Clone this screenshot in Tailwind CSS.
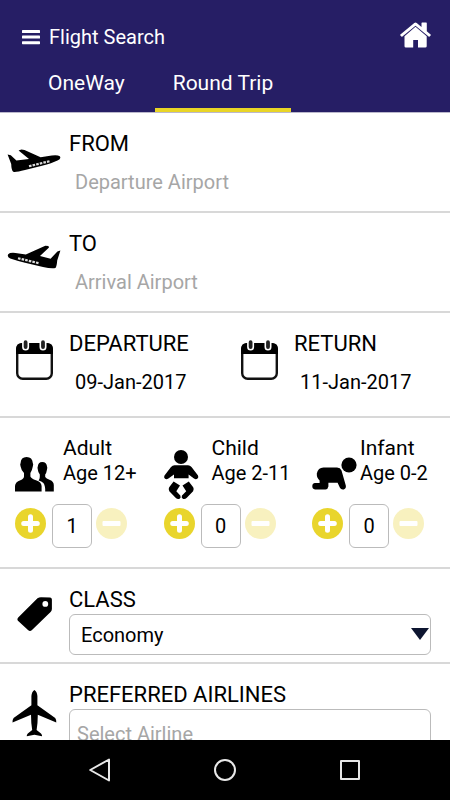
<!DOCTYPE html>
<html lang="en">
<head>
    <meta charset="UTF-8">
    <meta name="viewport" content="width=device-width, initial-scale=1.0">
    <title>Flight Search</title>
    <script src="https://cdn.jsdelivr.net/npm/@tailwindcss/browser@4"></script>
</head>
<body class="bg-white text-black font-[Roboto,sans-serif]">

    <div class="flex h-screen flex-col overflow-hidden">

        <!-- Header with menu, title and trip type tabs -->
        <header class="shrink-0 border-b border-[#bbb8cc] bg-[#261e65] pt-[17px] text-white">
            <div class="flex h-10 items-center justify-between pr-[19px] pl-[22px]">
                <div class="flex items-center gap-[9px]">
                    <button type="button" aria-label="Menu">
                        <svg class="block h-[16px] w-[18px]" viewBox="0 0 18 16" fill="currentColor">
                            <rect x="0" y="1" width="18" height="3" rx="0.6"/>
                            <rect x="0" y="6.6" width="18" height="3" rx="0.6"/>
                            <rect x="0" y="12.2" width="18" height="3" rx="0.6"/>
                        </svg>
                    </button>
                    <h1 class="text-[20px] leading-7">Flight Search</h1>
                </div>
                <a href="#" aria-label="Home">
                    <svg class="mb-1 block h-[26px] w-[31px]" viewBox="0 0 31 26" fill="currentColor">
                        <path d="M15.5 4.8 26.7 14.2V24.2Q26.7 25.6 25.3 25.6H18V18H13.2V25.6H5.9Q4.5 25.6 4.5 24.2V14.2Z"/>
                        <path d="M14.3.9Q15.5 0 16.7.9L21.5 4.9V1.2Q21.5.6 22.1.6H26.2Q26.8.6 26.8 1.2V9.3L30.6 12.5Q31.1 13 30.6 13.5L29.6 14.6Q29.1 15 28.6 14.6L15.5 3.8 2.4 14.6Q1.9 15 1.4 14.6L.4 13.5Q-.1 13 .4 12.5Z"/>
                    </svg>
                </a>
            </div>
            <nav class="flex h-[55px] gap-[12px] pl-[30px] text-[21px]">
                <button type="button" class="border-b-4 border-transparent px-[18px] pt-[2px]">OneWay</button>
                <button type="button" class="border-b-4 border-[#e9d526] px-[18px] pt-[2px]">Round Trip</button>
            </nav>
        </header>

        <form class="min-h-0 flex-1 overflow-hidden">
            <!-- From -->
            <div class="flex h-[100px] border-b-2 border-[#d8d8d8] pt-[17px]">
                <div class="w-[69px] shrink-0 pt-[19px] pl-[7px]">
                    <svg class="block h-[24px] w-[54px]" viewBox="0 0 54 24">
                        <path d="M.6 5.4 3.8 6.2 9.4 11.4 22 10 11.6 1.4 14.4.5 17.5 1 33.6 8.2 44.8 6.4Q50.6 5.6 52.8 7.2 54.6 9.7 50.5 11.6 45 14.3 35 16.8L18 21Q9 23.4 6.2 22.8 4.4 21.2 4.2 15Z" fill="#000"/>
                        <path d="M22 17.2 42.5 12.2" stroke="#ddd" stroke-width="2.2" stroke-dasharray="2.6 1.1"/>
                    </svg>
                </div>
                <div class="min-w-0 flex-1">
                    <label for="from" class="block text-[22px] leading-7">FROM</label>
                    <input id="from" type="text" placeholder="Departure Airport" class="mt-1 block h-10 w-full px-[6px] text-[20px] outline-none placeholder:text-[#a6a6a6]">
                </div>
            </div>

            <!-- To -->
            <div class="flex h-[100px] border-b-2 border-[#d8d8d8] pt-[17px]">
                <div class="w-[69px] shrink-0 pt-[15px] pl-[7px]">
                    <svg class="block h-[24px] w-[54px]" viewBox="0 0 54 24">
                        <path d="M53.4 5.6 50.4 6.4 43.6 13.8 33 11 42 2.4 41.4 1 38.3.8 18.8 9.6 8.5 8Q2.8 7.4 1.2 9.3-.2 12 3.2 13.6 9 15.6 18 17.8L36 21.9Q44.5 24 48.4 23 49.8 21.6 50.2 15.5Z" fill="#000"/>
                        <path d="M11 13.2 32.5 18.4" stroke="#ddd" stroke-width="2.2" stroke-dasharray="2.6 1.1"/>
                    </svg>
                </div>
                <div class="min-w-0 flex-1">
                    <label for="to" class="block text-[22px] leading-7">TO</label>
                    <input id="to" type="text" placeholder="Arrival Airport" class="mt-1 block h-10 w-full px-[6px] text-[20px] outline-none placeholder:text-[#a6a6a6]">
                </div>
            </div>

            <!-- Dates -->
            <div class="grid h-[105px] grid-cols-2 border-b-2 border-[#d8d8d8] pt-[17px]">
                <div class="flex">
                    <div class="w-[69px] shrink-0 pt-[9px] pl-[15px]">
                        <svg class="block h-[42px] w-[38px]" viewBox="0 0 38 42">
                            <rect x="2.2" y="5.2" width="34.6" height="34.6" rx="5.5" fill="#fff" stroke="#111" stroke-width="2.4"/>
                            <path d="M1 15V10Q1 4 7 4H32Q38 4 38 10V15Z" fill="#000"/>
                            <path d="M10.6 3.2V8M28 3.2V8" stroke="#fff" stroke-width="7" stroke-linecap="round"/>
                            <path d="M10.6 3.2V8M28 3.2V8" stroke="#222" stroke-width="3.8" stroke-linecap="round"/>
                        </svg>
                    </div>
                    <div class="min-w-0 flex-1">
                        <label for="departure" class="block text-[22px] leading-7">DEPARTURE</label>
                        <input id="departure" type="text" value="09-Jan-2017" class="mt-1 block h-10 w-full px-[6px] text-[20px] outline-none">
                    </div>
                </div>
                <div class="flex">
                    <div class="w-[69px] shrink-0 pt-[9px] pl-[15px]">
                        <svg class="block h-[42px] w-[38px]" viewBox="0 0 38 42">
                            <rect x="2.2" y="5.2" width="34.6" height="34.6" rx="5.5" fill="#fff" stroke="#111" stroke-width="2.4"/>
                            <path d="M1 15V10Q1 4 7 4H32Q38 4 38 10V15Z" fill="#000"/>
                            <path d="M10.6 3.2V8M28 3.2V8" stroke="#fff" stroke-width="7" stroke-linecap="round"/>
                            <path d="M10.6 3.2V8M28 3.2V8" stroke="#222" stroke-width="3.8" stroke-linecap="round"/>
                        </svg>
                    </div>
                    <div class="min-w-0 flex-1">
                        <label for="return" class="block text-[22px] leading-7">RETURN</label>
                        <input id="return" type="text" value="11-Jan-2017" class="mt-1 block h-10 w-full px-[6px] text-[20px] outline-none">
                    </div>
                </div>
            </div>

            <!-- Passengers -->
            <div class="flex h-[151px] border-b-2 border-[#d8d8d8] pt-[18px]">
                <div class="w-[33%]">
                    <div class="flex h-[68px] gap-[3px] pl-3">
                        <svg class="mt-[13px] block h-[52px] w-[48px] shrink-0" viewBox="0 0 48 52">
                            <path d="M30.2 13Q34.8 13.2 35 17.6 35.6 18.4 35 20.6 34.4 24.4 33.2 25.6V28Q34 29.6 38 31 41.6 32.4 41.8 36V42.5H33.2Q33.4 36.5 31.4 34 29.6 32.2 26.6 31.4 27.8 30 27.8 28V25.6Q26.2 24 25.8 20.6 25.2 18.4 25.8 17.6 26 13.2 30.2 13Z"/>
                            <path d="M14.6 8Q20.4 8.2 20.8 14 21.6 15 20.8 17.6 20 22 18.4 24V27.4Q19.2 29.4 24 31.2 29.4 33 29.6 37V42.5H3V37Q3.2 33 8.4 31.2 12 29.6 12 27.4V24Q9.4 22 8.6 17.6 7.8 15 8.6 14 8.8 8.2 14.6 8Z"/>
                        </svg>
                        <label for="adults" class="whitespace-nowrap">
                            <span class="block text-[21px] leading-[25px]">Adult</span>
                            <span class="block text-[20px] leading-[25px]">Age 12+</span>
                        </label>
                    </div>
                    <div class="flex h-[43px] items-center pl-[15px]">
                        <button type="button" aria-label="Add adult" class="mb-[4px] shrink-0">
                            <svg class="block h-[31px] w-[31px]" viewBox="0 0 31 31"><circle cx="15.5" cy="15.5" r="15.5" fill="#e9d52c"/><path d="M15.5 8.7V22.3M8.7 15.5H22.3" stroke="#fff" stroke-width="5" stroke-linecap="round"/></svg>
                        </button>
                        <input id="adults" type="text" value="1" class="ml-[6px] h-[44px] w-[40px] rounded-[6px] border border-[#bbb] text-center text-[20px] outline-none">
                        <button type="button" aria-label="Remove adult" class="mb-[4px] ml-1 shrink-0">
                            <svg class="block h-[31px] w-[31px]" viewBox="0 0 31 31"><circle cx="15.5" cy="15.5" r="15.5" fill="#f8f1bf"/><rect x="6.5" y="13" width="18" height="5" rx="1" fill="#fff"/></svg>
                        </button>
                    </div>
                </div>
                <div class="w-[33%]">
                    <div class="flex h-[68px] gap-[3px] pl-3">
                        <svg class="mt-[13px] block h-[52px] w-[48px] shrink-0" viewBox="0 0 48 52">
                            <circle cx="20" cy="8" r="7"/>
                            <path d="M13.5 16.3H27Q29 16.3 30.5 18L37 26.5Q38 28.6 36.3 29.8 34.8 30.8 33 29.6L27.6 25.4V29.3H13V25.4L7.4 29.6Q5.5 30.8 4 29.8 2.4 28.6 3.5 26.5L10 18Q11.5 16.3 13.5 16.3Z"/>
                            <path d="M12.6 32.5 19 36.4 15.3 42.2 19.3 46.6Q20.3 48.8 18.6 49.8 16.4 50.5 14.6 48.8L8.3 42.3Q7 40.4 8.2 38.3ZM27.8 32.5 21.5 36.4 25.2 42.2 21 46.6Q20 48.8 21.8 49.8 24 50.5 25.8 48.8L32.1 42.3Q33.4 40.4 32.2 38.3Z"/>
                        </svg>
                        <label for="children" class="whitespace-nowrap">
                            <span class="block text-[21px] leading-[25px]">Child</span>
                            <span class="block text-[20px] leading-[25px]">Age 2-11</span>
                        </label>
                    </div>
                    <div class="flex h-[43px] items-center pl-[15px]">
                        <button type="button" aria-label="Add child" class="mb-[4px] shrink-0">
                            <svg class="block h-[31px] w-[31px]" viewBox="0 0 31 31"><circle cx="15.5" cy="15.5" r="15.5" fill="#e9d52c"/><path d="M15.5 8.7V22.3M8.7 15.5H22.3" stroke="#fff" stroke-width="5" stroke-linecap="round"/></svg>
                        </button>
                        <input id="children" type="text" value="0" class="ml-[6px] h-[44px] w-[40px] rounded-[6px] border border-[#bbb] text-center text-[20px] outline-none">
                        <button type="button" aria-label="Remove child" class="mb-[4px] ml-1 shrink-0">
                            <svg class="block h-[31px] w-[31px]" viewBox="0 0 31 31"><circle cx="15.5" cy="15.5" r="15.5" fill="#f8f1bf"/><rect x="6.5" y="13" width="18" height="5" rx="1" fill="#fff"/></svg>
                        </button>
                    </div>
                </div>
                <div class="w-[33%]">
                    <div class="flex h-[68px] gap-[3px] pl-3">
                        <svg class="mt-[13px] block h-[52px] w-[48px] shrink-0" viewBox="0 0 48 52">
                            <circle cx="40" cy="16" r="7.6"/>
                            <path d="M14.5 18.6H28Q31.4 18.8 32.5 21.4L36.8 36.5Q37.4 39.5 34.8 40.4 32 41 30.8 38.5L28.6 33.8H19.4V37.6Q19 40.3 16.5 40.4H6Q3.3 40 3.3 37.3 3.3 34.3 6 34.1H10.6V31.6Q7.6 29 7.8 24.6 9 18.8 14.5 18.6Z"/>
                        </svg>
                        <label for="infants" class="whitespace-nowrap">
                            <span class="block text-[21px] leading-[25px]">Infant</span>
                            <span class="block text-[20px] leading-[25px]">Age 0-2</span>
                        </label>
                    </div>
                    <div class="flex h-[43px] items-center pl-[15px]">
                        <button type="button" aria-label="Add infant" class="mb-[4px] shrink-0">
                            <svg class="block h-[31px] w-[31px]" viewBox="0 0 31 31"><circle cx="15.5" cy="15.5" r="15.5" fill="#e9d52c"/><path d="M15.5 8.7V22.3M8.7 15.5H22.3" stroke="#fff" stroke-width="5" stroke-linecap="round"/></svg>
                        </button>
                        <input id="infants" type="text" value="0" class="ml-[6px] h-[44px] w-[40px] rounded-[6px] border border-[#bbb] text-center text-[20px] outline-none">
                        <button type="button" aria-label="Remove infant" class="mb-[4px] ml-1 shrink-0">
                            <svg class="block h-[31px] w-[31px]" viewBox="0 0 31 31"><circle cx="15.5" cy="15.5" r="15.5" fill="#f8f1bf"/><rect x="6.5" y="13" width="18" height="5" rx="1" fill="#fff"/></svg>
                        </button>
                    </div>
                </div>
            </div>

            <!-- Class -->
            <div class="flex h-[95px] border-b-2 border-[#d8d8d8] pt-[17px] pr-[19px]">
                <div class="w-[69px] shrink-0 pt-[11px] pl-[17px]">
                    <svg class="block h-[35px] w-[36px]" viewBox="0 0 36 35">
                        <path fill-rule="evenodd" d="M20.5 1.2Q22 .2 24 .2L33 .5Q34.8.7 34.9 2.5V12Q34.8 13.8 33.6 15L15 33Q13 34.8 11 33L1.2 24Q-.4 22.2 1.2 20.4ZM28.3 4A2.9 2.9 0 1 0 28.3 9.8 2.9 2.9 0 1 0 28.3 4Z"/>
                    </svg>
                </div>
                <div class="min-w-0 flex-1">
                    <label for="class" class="block text-[22px] leading-7">CLASS</label>
                    <div class="relative">
                        <select id="class" class="block h-[41px] w-full appearance-none rounded-[6px] border border-[#bbb] bg-white px-[11px] text-[20px] outline-none">
                            <option>Economy</option>
                            <option>Business</option>
                            <option>First</option>
                        </select>
                        <svg class="pointer-events-none absolute top-[14px] right-[2px] h-[12px] w-[18px]" viewBox="0 0 18 12"><path d="M0 0H18L9 12Z" fill="#0d1530"/></svg>
                    </div>
                </div>
            </div>

            <!-- Preferred airlines -->
            <div class="flex pt-[17px] pr-[19px]">
                <div class="w-[69px] shrink-0 pt-[9px] pl-[12px]">
                    <svg class="block h-[47px] w-[45px]" viewBox="0 0 45 47">
                        <path d="M22.4 0Q25 1.5 25.4 6V15.2L43.2 28Q44.6 30 44.3 32.5L25.8 24.8Q25.8 33 24.6 40L29 43.4Q30.4 45 30 46.2L22.4 44.8 14.8 46.2Q14.4 45 15.8 43.4L20.2 40Q19 33 19 24.8L.5 32.5Q.2 30 1.6 28L19.4 15.2V6Q19.8 1.5 22.4 0Z"/>
                    </svg>
                </div>
                <div class="min-w-0 flex-1">
                    <label for="airline" class="block text-[22px] leading-7">PREFERRED AIRLINES</label>
                    <input id="airline" type="text" placeholder="Select Airline" class="block h-[50px] w-full rounded-[6px] border border-[#bbb] px-[7px] text-[20px] outline-none placeholder:text-[#a6a6a6]">
                </div>
            </div>
        </form>

        <!-- System navigation bar -->
        <div class="flex h-[60px] shrink-0 bg-black px-[37px] text-[#e8e8e8]">
            <button type="button" aria-label="Back" class="flex flex-1 items-center justify-center">
                <svg class="block h-6 w-6" viewBox="0 0 24 24" fill="none" stroke="currentColor" stroke-width="2" stroke-linejoin="round"><path d="M21 1.5V22.5L2.2 12Z"/></svg>
            </button>
            <button type="button" aria-label="Home screen" class="flex flex-1 items-center justify-center">
                <svg class="block h-6 w-6" viewBox="0 0 24 24" fill="none" stroke="currentColor" stroke-width="2"><circle cx="12" cy="12" r="10"/></svg>
            </button>
            <button type="button" aria-label="Recent apps" class="flex flex-1 items-center justify-center">
                <svg class="block h-6 w-6" viewBox="0 0 24 24" fill="none" stroke="currentColor" stroke-width="2" stroke-linejoin="round"><rect x="3" y="3" width="18" height="18"/></svg>
            </button>
        </div>
    </div>

</body>
</html>
